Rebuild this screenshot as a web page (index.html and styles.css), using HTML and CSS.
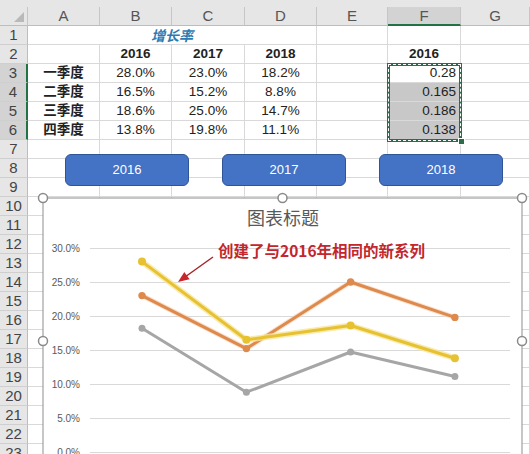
FILE: index.html
```html
<!DOCTYPE html>
<html lang="zh">
<head>
<meta charset="utf-8">
<title>增长率</title>
<link rel="stylesheet" href="styles.css">
</head>
<body>
<div class="sheet">
  <div class="strip"></div>
  <div class="row hdr">
    <div class="corner"></div><div>A</div><div>B</div><div>C</div><div>D</div><div>E</div><div class="col-sel">F</div><div>G</div>
  </div>
  <div class="row"><div class="rh">1</div><div class="merge title-cell">增长率</div><div></div><div class="f"></div><div></div></div>
  <div class="row"><div class="rh">2</div><div></div><div class="b ctr">2016</div><div class="b ctr">2017</div><div class="b ctr">2018</div><div></div><div class="b ctr">2016</div><div></div></div>
  <div class="row"><div class="rh sel">3</div><div class="b ctr">一季度</div><div class="ctr">28.0%</div><div class="ctr">23.0%</div><div class="ctr">18.2%</div><div></div><div class="num">0.28</div><div></div></div>
  <div class="row"><div class="rh sel">4</div><div class="b ctr">二季度</div><div class="ctr">16.5%</div><div class="ctr">15.2%</div><div class="ctr">8.8%</div><div></div><div class="num gray">0.165</div><div></div></div>
  <div class="row"><div class="rh sel">5</div><div class="b ctr">三季度</div><div class="ctr">18.6%</div><div class="ctr">25.0%</div><div class="ctr">14.7%</div><div></div><div class="num gray">0.186</div><div></div></div>
  <div class="row"><div class="rh sel">6</div><div class="b ctr">四季度</div><div class="ctr">13.8%</div><div class="ctr">19.8%</div><div class="ctr">11.1%</div><div></div><div class="num gray">0.138</div><div></div></div>
  <div class="row"><div class="rh">7</div><div></div><div></div><div></div><div></div><div></div><div></div><div></div></div>
  <div class="row"><div class="rh">8</div><div></div><div></div><div></div><div></div><div></div><div></div><div></div></div>
  <div class="row"><div class="rh">9</div><div></div><div></div><div></div><div></div><div></div><div></div><div></div></div>
  <div class="row"><div class="rh">10</div><div></div><div></div><div></div><div></div><div></div><div></div><div></div></div>
  <div class="row"><div class="rh">11</div><div></div><div></div><div></div><div></div><div></div><div></div><div></div></div>
  <div class="row"><div class="rh">12</div><div></div><div></div><div></div><div></div><div></div><div></div><div></div></div>
  <div class="row"><div class="rh">13</div><div></div><div></div><div></div><div></div><div></div><div></div><div></div></div>
  <div class="row"><div class="rh">14</div><div></div><div></div><div></div><div></div><div></div><div></div><div></div></div>
  <div class="row"><div class="rh">15</div><div></div><div></div><div></div><div></div><div></div><div></div><div></div></div>
  <div class="row"><div class="rh">16</div><div></div><div></div><div></div><div></div><div></div><div></div><div></div></div>
  <div class="row"><div class="rh">17</div><div></div><div></div><div></div><div></div><div></div><div></div><div></div></div>
  <div class="row"><div class="rh">18</div><div></div><div></div><div></div><div></div><div></div><div></div><div></div></div>
  <div class="row"><div class="rh">19</div><div></div><div></div><div></div><div></div><div></div><div></div><div></div></div>
  <div class="row"><div class="rh">20</div><div></div><div></div><div></div><div></div><div></div><div></div><div></div></div>
  <div class="row"><div class="rh">21</div><div></div><div></div><div></div><div></div><div></div><div></div><div></div></div>
  <div class="row"><div class="rh">22</div><div></div><div></div><div></div><div></div><div></div><div></div><div></div></div>
  <div class="row"><div class="rh">23</div><div></div><div></div><div></div><div></div><div></div><div></div><div></div></div>

  <div class="marquee"><span class="fill-handle"></span></div>

  <div class="buttons">
    <div class="btn">2016</div>
    <div class="btn">2017</div>
    <div class="btn">2018</div>
  </div>

  <svg class="chart" width="490" height="270" viewBox="-5 -5 490 270">
    <rect x="0" y="0" width="479" height="300" fill="#fff" stroke="#8d8d8d" stroke-width="1"/>
    <text x="240" y="27" class="ctitle" text-anchor="middle">图表标题</text>
    <g stroke="#d9d9d9" stroke-width="1">
      <line x1="47" y1="50.5" x2="467" y2="50.5"/>
      <line x1="47" y1="84.5" x2="467" y2="84.5"/>
      <line x1="47" y1="118.5" x2="467" y2="118.5"/>
      <line x1="47" y1="152.5" x2="467" y2="152.5"/>
      <line x1="47" y1="186.5" x2="467" y2="186.5"/>
      <line x1="47" y1="220.5" x2="467" y2="220.5"/>
      <line x1="47" y1="254.5" x2="467" y2="254.5"/>
    </g>
    <g class="axis" text-anchor="end">
      <text x="37" y="54">30.0%</text>
      <text x="37" y="88">25.0%</text>
      <text x="37" y="122">20.0%</text>
      <text x="37" y="156">15.0%</text>
      <text x="37" y="190">10.0%</text>
      <text x="37" y="224">5.0%</text>
      <text x="37" y="258">0.0%</text>
    </g>
    <!-- 2018 grey -->
    <polyline points="99,130.2 203.4,194.2 307.6,154 411.9,178.5" fill="none" stroke="#a6a6a6" stroke-width="3" stroke-linejoin="round"/>
    <g fill="#a6a6a6">
      <circle cx="99" cy="130.2" r="3.5"/><circle cx="203.4" cy="194.2" r="3.5"/><circle cx="307.6" cy="154" r="3.5"/><circle cx="411.9" cy="178.5" r="3.5"/>
    </g>
    <!-- 2017 orange -->
    <polyline points="99,97.6 203.4,150.6 307.6,84 411.9,119.4" fill="none" stroke="#f6c9a6" stroke-width="5" stroke-linejoin="round" opacity="0.6"/>
    <polyline points="99,97.6 203.4,150.6 307.6,84 411.9,119.4" fill="none" stroke="#de8a4d" stroke-width="3" stroke-linejoin="round"/>
    <g fill="#de8a4d">
      <circle cx="99" cy="97.6" r="3.7"/><circle cx="203.4" cy="150.6" r="3.7"/><circle cx="307.6" cy="84" r="3.7"/><circle cx="411.9" cy="119.4" r="3.7"/>
    </g>
    <!-- 2016 yellow -->
    <polyline points="99,63.6 203.4,141.8 307.6,127.5 411.9,160.2" fill="none" stroke="#f7e59a" stroke-width="6" stroke-linejoin="round" opacity="0.8"/>
    <polyline points="99,63.6 203.4,141.8 307.6,127.5 411.9,160.2" fill="none" stroke="#e6c232" stroke-width="3" stroke-linejoin="round"/>
    <g fill="#e6c232">
      <circle cx="99" cy="63.6" r="4"/><circle cx="203.4" cy="141.8" r="4"/><circle cx="307.6" cy="127.5" r="4"/><circle cx="411.9" cy="160.2" r="4"/>
    </g>
    <!-- annotation -->
    <line x1="170" y1="59" x2="142" y2="79" stroke="#a5262a" stroke-width="1.5"/>
    <polygon points="135,84 146.6,81.3 141.3,74" fill="#c8262c"/>
    <text x="175" y="59" class="note">创建了与2016年相同的新系列</text>
    <!-- handles -->
    <g fill="#fff" stroke="#8a8a8a" stroke-width="1.5">
      <circle cx="0" cy="0" r="4.5"/>
      <circle cx="239.5" cy="0" r="4.5"/>
      <circle cx="479" cy="0" r="4.5"/>
      <circle cx="0" cy="143" r="4.5"/>
      <circle cx="479" cy="143" r="4.5"/>
    </g>
  </svg>
</div>
</body>
</html>
```
FILE: styles.css
```css
html, body {
  margin: 0;
  padding: 0;
  background: #fff;
  overflow: hidden;
}
body {
  width: 530px;
  height: 454px;
  font-family: "Liberation Sans", "Noto Sans CJK SC", sans-serif;
  font-size: 13.5px;
  color: #222;
}
.sheet {
  position: relative;
  width: 530px;
  height: 454px;
  overflow: hidden;
}
.strip {
  height: 7px;
  background: #e6e6e6;
}
.row {
  display: grid;
  grid-template-columns: 28px 72px 72px 73px 72px 71px 73px 69px;
  height: 19px;
}
.row > div {
  box-sizing: border-box;
  border-right: 1px solid #d9d9d9;
  border-bottom: 1px solid #d9d9d9;
  line-height: 18px;
  white-space: nowrap;
  overflow: hidden;
}
.hdr {
  background: #e6e6e6;
}
.hdr > div {
  border-right: 1px solid #c6c6c6;
  border-bottom: 1px solid #bdbdbd;
  text-align: center;
  color: #555;
  font-size: 15px;
  line-height: 18px;
}
.corner {
  position: relative;
}
.corner::after {
  content: "";
  position: absolute;
  right: 3px;
  bottom: 3px;
  width: 0;
  height: 0;
  border-left: 10px solid transparent;
  border-bottom: 10px solid #b9b9b9;
}
.hdr > .col-sel {
  background: #d3d3d3;
  border-bottom: 2px solid #217346;
  color: #555;
}
.row > .rh {
  background: #e6e6e6;
  border-right: 1px solid #bdbdbd;
  border-bottom: 1px solid #cfcfcf;
  text-align: center;
  color: #444;
  font-size: 15px;
}
.row > .rh.sel {
  background: #d3d3d3;
  border-right: 2px solid #217346;
}
.merge {
  grid-column: span 4;
}
.title-cell {
  text-align: center;
  color: #2e79b0;
  font-style: italic;
  font-weight: bold;
  font-size: 14px;
  font-family: "Noto Sans CJK SC", sans-serif;
}
.b {
  font-weight: bold;
}
.ctr {
  text-align: center;
}
.num {
  text-align: right;
  padding-right: 4px;
}
.row > .gray {
  background: #c8c8c8;
}
.marquee {
  position: absolute;
  left: 387px;
  top: 63px;
  width: 69px;
  height: 73px;
  border: 3px solid #2c6b4b;
}
.marquee::after {
  content: "";
  position: absolute;
  inset: -2px;
  border: 1px dashed #fff;
}
.fill-handle {
  position: absolute;
  right: -6px;
  bottom: -6px;
  width: 5px;
  height: 5px;
  background: #2c6b4b;
  border: 1px solid #fff;
  z-index: 2;
}
.buttons {
  position: absolute;
  left: 65px;
  top: 154px;
  display: flex;
  gap: 33px;
}
.btn {
  box-sizing: border-box;
  width: 124px;
  height: 32px;
  background: #4472c4;
  border: 1px solid #2f5597;
  border-radius: 6px;
  color: #fff;
  font-size: 13px;
  line-height: 30px;
  text-align: center;
}
.chart {
  position: absolute;
  left: 38px;
  top: 193px;
  overflow: visible;
}
.ctitle {
  font-family: "Noto Sans CJK SC", sans-serif;
  font-size: 18px;
  fill: #595959;
}
.axis text {
  font-family: "Liberation Sans", sans-serif;
  font-size: 10px;
  fill: #595959;
}
.note {
  font-family: "Noto Sans CJK SC", sans-serif;
  font-size: 15.5px;
  font-weight: bold;
  fill: #c3262d;
}
```
